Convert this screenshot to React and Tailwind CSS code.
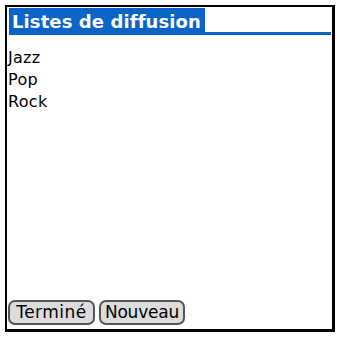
export default function App() {
  return (
    <div className="w-[337px] h-[337px] bg-white pt-[5px] pl-[5px]" style={{ fontFamily: '"DejaVu Sans", Verdana, sans-serif' }}>
      <div className="w-[330px] h-[327px] border-l-2 border-t-2 border-r-[3px] border-b-[3px] border-black flex flex-col">
        <div className="flex items-end pt-[1px] pl-[2px] pr-[1px]">
          <div className="bg-[#0a64c8] h-[27px] w-[196px] pl-[3px] flex items-center text-white font-bold text-[18px] tracking-[0.1px]">
            Listes de diffusion
          </div>
          <div className="flex-1 h-[3px] bg-[#0a64c8]"></div>
        </div>
        <div className="flex flex-col pt-[12px] pl-[1px] text-[16px] leading-[22px] text-black tracking-[0.3px]">
          <div>Jazz</div>
          <div>Pop</div>
          <div>Rock</div>
        </div>
        <div className="flex-1"></div>
        <div className="flex gap-[4px] pl-[1px] pb-[4px] text-[17px]">
          <div className="h-[25px] w-[87px] flex items-center justify-center rounded-[7px] border-2 border-[#555] bg-[#dcdcdc] text-black tracking-[0.5px]">Terminé</div>
          <div className="h-[25px] w-[86px] flex items-center justify-center rounded-[7px] border-2 border-[#555] bg-[#dcdcdc] text-black tracking-[-0.2px]">Nouveau</div>
        </div>
      </div>
    </div>
  );
}
